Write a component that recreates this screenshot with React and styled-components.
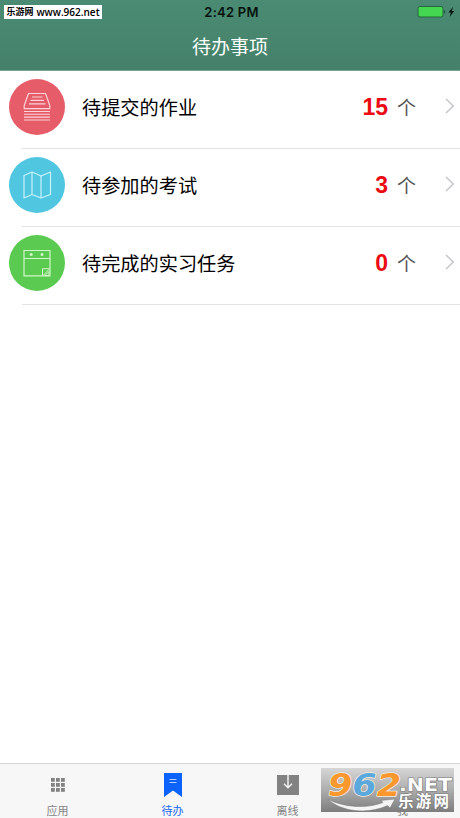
import React from "react";
import styled, { createGlobalStyle } from "styled-components";

const todos = [
    { title: "待提交的作业", count: 15, color: "#e65d69", icon: <TrayIcon /> },
    { title: "待参加的考试", count: 3, color: "#51c6e1", icon: <MapIcon /> },
    { title: "待完成的实习任务", count: 0, color: "#5bca50", icon: <CalendarIcon /> },
];

const tabs = [
    { label: "应用", icon: <GridIcon /> },
    { label: "待办", icon: <BookmarkIcon />, active: true },
    { label: "离线", icon: <DownloadIcon /> },
    { label: "我", icon: <UserIcon /> },
];

function App() {
    return (
        <Screen>
            <GlobalStyle />
            <Header>
                <StatusBar>
                    <SiteTag>
                        <SiteName>乐游网</SiteName>
                        <SiteUrl>www.962.net</SiteUrl>
                    </SiteTag>
                    <Clock>2:42 PM</Clock>
                    <Battery />
                </StatusBar>
                <Title>待办事项</Title>
            </Header>
            <List>
                {todos.map((todo) => (
                    <Row key={todo.title}>
                        <Badge $color={todo.color}>{todo.icon}</Badge>
                        <RowTitle>{todo.title}</RowTitle>
                        <Count>{todo.count}</Count>
                        <Unit>个</Unit>
                        <Chevron />
                    </Row>
                ))}
            </List>
            <TabBar>
                {tabs.map((tab) => (
                    <Tab key={tab.label} $active={tab.active}>
                        <TabIcon>{tab.icon}</TabIcon>
                        <span>{tab.label}</span>
                    </Tab>
                ))}
            </TabBar>
            <Watermark />
        </Screen>
    );
}

export default App;

function TrayIcon() {
    return (
        <svg width="56" height="56" viewBox="0 0 56 56" fill="none" stroke="#fbd3d6" strokeWidth="1">
            <path d="M19.5 14.5h17l4.3 12v3.2H15.2v-3.2z" strokeWidth="1.2" strokeLinejoin="round" />
            <path d="M23 18h10.5M21.5 21.3h13.5M20 24.8h16.5" strokeWidth="1.2" />
            <path d="M15 32.5h26M15 35.3h26M15 38.1h26M15 41h26" strokeWidth="1.1" />
        </svg>
    );
}

function MapIcon() {
    return (
        <svg width="56" height="56" viewBox="0 0 56 56" fill="none" stroke="#c9f2fc" strokeWidth="1.2" strokeLinejoin="round">
            <path d="M15 18.5l8-3.5 9 4 9.5-4v22.5l-9.5 3.5-9-3.5-8 3.5z" />
            <path d="M23 15v22.5M32 19v22" />
        </svg>
    );
}

function CalendarIcon() {
    return (
        <svg width="56" height="56" viewBox="0 0 56 56" fill="none" stroke="#d2f5ca" strokeWidth="1.2">
            <path d="M15 15.5h26v25.3H15zM15 23.5h26" />
            <path d="M33.5 40.5v-6.8h7M34 40.5l6.5-6.5M36 40.5h4v-4z" strokeWidth="1" />
            <circle cx="22.2" cy="19.5" r="1.5" fill="#d2f5ca" stroke="none" />
            <circle cx="33" cy="19.5" r="1.5" fill="#d2f5ca" stroke="none" />
        </svg>
    );
}

function Chevron() {
    return (
        <ChevronSvg viewBox="0 0 10 16">
            <path d="M1 1l7.3 7L1 15" fill="none" stroke="#c3c3c7" strokeWidth="1.4" />
        </ChevronSvg>
    );
}

function Battery() {
    return (
        <BatterySvg viewBox="0 0 40 14">
            <rect x="1" y="1.5" width="25" height="10.5" rx="2" fill="#44d650" stroke="#24673d" />
            <path d="M27.3 5c1.2.5 1.2 3.2 0 3.7z" fill="#173c2a" />
            <path d="M36.2 1.8l-4.8 5.7h2.5l-1.3 4.4 4.6-5.8h-2.5z" fill="#07130d" />
        </BatterySvg>
    );
}

function GridIcon() {
    const steps = [0, 5, 10];
    return (
        <svg width="14" height="14" viewBox="0 0 14 14" fill="#828282">
            {steps.map((y) => steps.map((x) => <rect key={`${x}-${y}`} x={x} y={y} width="3.8" height="3.8" />))}
        </svg>
    );
}

function BookmarkIcon() {
    return (
        <svg width="18" height="24" viewBox="0 0 18 24">
            <path d="M0 0h18v24l-9-6.5L0 24z" fill="#0b63fb" />
            <path d="M5.5 6.5h7M5.5 9.5h7" stroke="#b4d0ff" strokeWidth="1.2" />
        </svg>
    );
}

function DownloadIcon() {
    return (
        <svg width="22" height="20" viewBox="0 0 22 20">
            <path d="M0 0h22v20H0z" fill="#828282" />
            <path d="M11 0v12.5M7 8.7l4 4 4-4" fill="none" stroke="#f1f1f1" strokeWidth="1.5" />
        </svg>
    );
}

function UserIcon() {
    return (
        <svg width="18" height="20" viewBox="0 0 18 20" fill="#828282">
            <circle cx="9" cy="5" r="4" />
            <path d="M1 19c0-10 16-10 16 0z" />
        </svg>
    );
}

function Watermark() {
    return (
        <WatermarkSvg viewBox="0 0 133 44">
            <defs>
                <linearGradient id="plate" x1="0" y1="0" x2="0" y2="1">
                    <stop offset="0" stopColor="#d6d6d6" />
                    <stop offset="0.5" stopColor="#adadad" />
                    <stop offset="1" stopColor="#7d7d7d" />
                </linearGradient>
            </defs>
            <rect width="133" height="44" fill="url(#plate)" />
            <text x="7" y="28" fontFamily='"DejaVu Sans", sans-serif' fontWeight="bold" fontStyle="italic" fontSize="32" textLength="73" lengthAdjust="spacingAndGlyphs" stroke="#f4eee4" strokeWidth="1.4" paintOrder="stroke" strokeLinejoin="round">
                <tspan fill="#fa982d">9</tspan>
                <tspan fill="#5ba8dc">6</tspan>
                <tspan fill="#fa982d">2</tspan>
            </text>
            <path d="M6.5 31C22 39.5 46 41 62 34.5L60 32.5l14-1.5-5 9-2.5-2.5C46 47 20 43.5 6.5 31z" fill="#f5f5f5" stroke="#777" strokeWidth=".5" />
            <g fill="#fff" stroke="#7b7b7b" strokeWidth="1.2" paintOrder="stroke" fontWeight="bold">
                <text x="78" y="23" fontFamily='"DejaVu Sans", sans-serif' fontSize="18" textLength="53" lengthAdjust="spacingAndGlyphs">.NET</text>
                <text x="77" y="39" fontFamily='"Noto Sans CJK SC", sans-serif' fontSize="15.5" textLength="51">乐游网</text>
            </g>
        </WatermarkSvg>
    );
}

const GlobalStyle = createGlobalStyle`
  * {
    box-sizing: border-box;
  }
  body {
    margin: 0;
    background: #fff;
    font-family: Inter, "Noto Sans CJK SC", sans-serif;
  }
  svg {
    display: block;
    flex-shrink: 0;
  }
`;

const Screen = styled.div`
  position: relative;
  display: flex;
  flex-direction: column;
  width: 460px;
  height: 818px;
  overflow: hidden;
  background: #fff;
`;

const Header = styled.header`
  height: 71px;
  background: linear-gradient(#4b8b73, #45816a);
  border-bottom: 1px solid #78a292;
`;

const StatusBar = styled.div`
  display: grid;
  grid-template-columns: 1fr auto 1fr;
  align-items: center;
  height: 23px;
  padding: 0 4px;
`;

const SiteTag = styled.div`
  display: flex;
  align-items: center;
  justify-content: center;
  gap: 3px;
  width: 98px;
  height: 14px;
  margin-top: 1px;
  background: #fff;
  color: #000;
  line-height: 14px;
  white-space: nowrap;
`;

const SiteName = styled.span`
  font: bold 9px/14px "Noto Sans CJK SC", sans-serif;
`;

const SiteUrl = styled.span`
  font: 600 10px/14px "Open Sans", sans-serif;
`;

const Clock = styled.div`
  font-size: 13px;
  font-weight: 600;
  letter-spacing: 0.25px;
  color: #06130d;
  padding-left: 3px;
`;

const BatterySvg = styled.svg`
  justify-self: end;
  width: 40px;
  height: 14px;
  margin-right: -1px;
`;

const Title = styled.h1`
  margin: 0;
  font: 400 19px/46px "Noto Sans CJK SC", sans-serif;
  text-align: center;
  color: #fff;
`;

const List = styled.main`
  flex: 1;
`;

const Row = styled.div`
  display: flex;
  align-items: center;
  height: 78px;
  padding: 0 5px 7px 9px;
  background: linear-gradient(#e3e3e5, #e3e3e5) 22px 77px no-repeat;
  background-size: 100% 1px;
`;

const Badge = styled.div`
  width: 56px;
  height: 56px;
  border-radius: 50%;
  background: ${({ $color }) => $color};
`;

const RowTitle = styled.div`
  flex: 1;
  margin-left: 17px;
  font: 400 19.2px/28px "Noto Sans CJK SC", sans-serif;
  color: #000;
`;

const Count = styled.div`
  font: 700 23px/28px "Liberation Sans", sans-serif;
  color: #ec0b12;
`;

const Unit = styled.div`
  width: 19px;
  margin-left: 9px;
  font: 400 19px/28px "Noto Sans CJK SC", sans-serif;
  color: #555;
`;

const ChevronSvg = styled.svg`
  width: 10px;
  height: 16px;
  margin: -1px 0 0 29px;
`;

const TabBar = styled.nav`
  display: grid;
  grid-template-columns: repeat(4, 1fr);
  height: 55px;
  border-top: 1px solid #d6d6d6;
  background: #f7f7f7;
`;

const Tab = styled.div`
  display: flex;
  flex-direction: column;
  align-items: center;
  font: 400 11px/16px "Noto Sans CJK SC", sans-serif;
  color: ${({ $active }) => ($active ? "#1768f2" : "#858585")};
`;

const TabIcon = styled.div`
  display: flex;
  align-items: center;
  justify-content: center;
  height: 38px;
  padding-top: 4px;
`;

const WatermarkSvg = styled.svg`
  position: absolute;
  left: 321px;
  top: 768px;
  width: 133px;
  height: 44px;
  overflow: visible;
`;
